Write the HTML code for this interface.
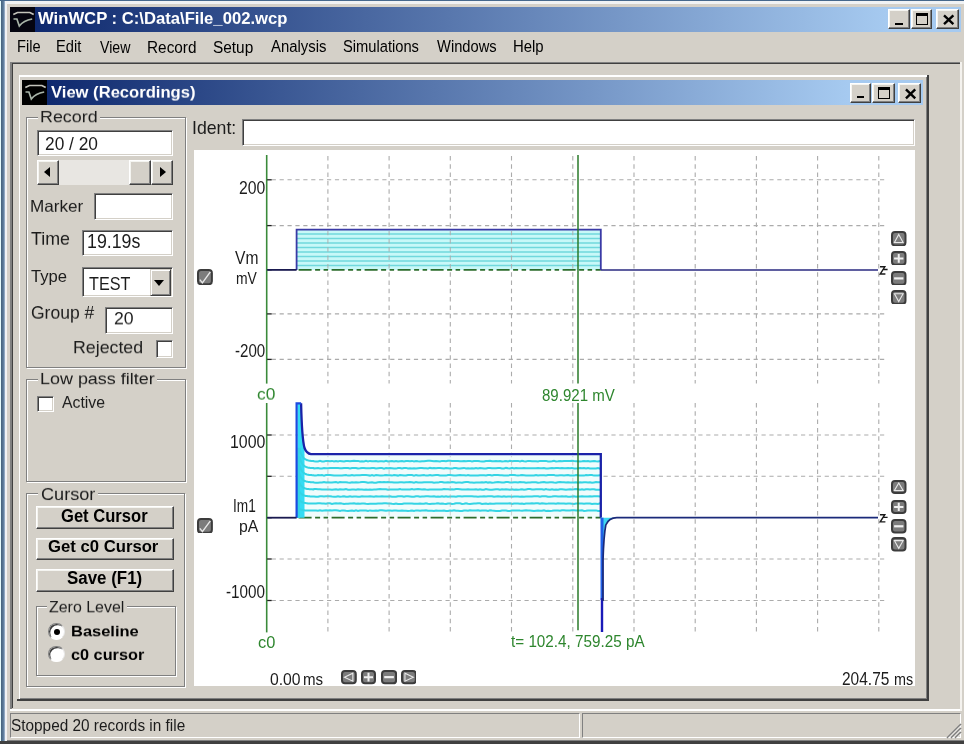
<!DOCTYPE html><html><head><meta charset="utf-8"><style>
*{margin:0;padding:0;box-sizing:border-box}
html,body{width:964px;height:744px;overflow:hidden;background:#d4d0c8}
body{position:relative;font-family:"Liberation Sans",sans-serif;color:#000}
.a{position:absolute}
.t{position:absolute;white-space:nowrap;line-height:1;transform-origin:0 0;will-change:transform}
.raised{background:#d4d0c8;border:1px solid;border-color:#fff #404040 #404040 #fff;box-shadow:inset -1px -1px 0 #808080,inset 1px 1px 0 #f4f4f0}
.sunk{background:#fff;border:1px solid;border-color:#808080 #fff #fff #808080;box-shadow:inset 1px 1px 0 #404040,inset -1px -1px 0 #d4d0c8}
.grp{border:1px solid #808080;box-shadow:1px 1px 0 #fff,inset 1px 1px 0 #fff}
.gl{position:absolute;background:#d4d0c8;padding:0 3px;line-height:1;white-space:nowrap}
</style></head><body>
<div class="a " style="left:0px;top:0px;width:964px;height:744px;background:#d4d0c8"></div>
<div class="a " style="left:0px;top:0px;width:1px;height:744px;background:#e4fafc"></div>
<div class="a " style="left:1px;top:0px;width:3.5px;height:744px;background:linear-gradient(to right,#44607a,#5c7c9c 60%,#a8bcd4)"></div>
<div class="a " style="left:0px;top:0px;width:964px;height:1.4px;background:#46688c"></div>
<div class="a " style="left:4.5px;top:1.4px;width:959.5px;height:2.4px;background:#f0f2f4"></div>
<div class="a " style="left:4.5px;top:1.4px;width:2.0px;height:742.6px;background:#f0f2f4"></div>
<div class="a " style="left:0px;top:741px;width:964px;height:3px;background:#404040"></div>
<div class="a " style="left:6.5px;top:739.5px;width:957.5px;height:1.5px;background:#808080"></div>
<div class="a " style="left:9.5px;top:7px;width:951.5px;height:25px;background:linear-gradient(to right,#0a246a 0px,#a6caf0 878px)"></div>
<div class="a" style="left:10px;top:7px;width:25px;height:25px;background:#050510"></div>
<svg class="a" style="left:10px;top:7px" width="25" height="25" viewBox="0 0 25 25"><path d="M3.3 7.4 L7.5 5.5 H19.9 L23.7 7.6" stroke="#c4c4bc" stroke-width="1.7" fill="none"/><path d="M3.5 12 H6.9 L9.3 19 Q13.5 13.5 22.2 12" stroke="#a8b4a8" stroke-width="1.7" fill="none"/></svg>
<div class="a raised" style="left:888px;top:9.3px;width:21.600000000000023px;height:19.7px;"><div class="a" style="left:5.832000000000007px;top:12.213999999999999px;width:7.776000000000008px;height:2.5px;background:#000"></div></div>
<div class="a raised" style="left:910.7px;top:9.3px;width:21.799999999999955px;height:19.7px;"><div class="a" style="left:4.359999999999991px;top:2.9549999999999996px;width:11.989999999999975px;height:12.213999999999999px;border:1.3px solid #000;border-top-width:3px"></div></div>
<div class="a raised" style="left:935.6px;top:9.3px;width:23.399999999999977px;height:19.7px;"><svg class="a" style="left:0;top:0" width="23.399999999999977" height="19.7" viewBox="0 0 23.399999999999977 19.7"><path d="M7.019999999999993 5.319 L16.379999999999985 14.184 M16.379999999999985 5.319 L7.019999999999993 14.184" stroke="#000" stroke-width="2.4"/></svg></div>
<div class="a " style="left:10.3px;top:61.5px;width:950.7px;height:1.2999999999999972px;background:#808080"></div>
<div class="a " style="left:10.3px;top:61.5px;width:1.299999999999999px;height:647.5px;background:#808080"></div>
<div class="a " style="left:11.6px;top:62.8px;width:948.4px;height:1.2000000000000028px;background:#404040"></div>
<div class="a " style="left:11.6px;top:62.8px;width:1.200000000000001px;height:645.2px;background:#404040"></div>
<div class="a " style="left:9.5px;top:709px;width:952.5px;height:1.5px;background:#fff"></div>
<div class="a " style="left:959.6px;top:61.5px;width:2.699999999999932px;height:649.0px;background:#f4f2ee"></div>
<div class="a " style="left:18.5px;top:75px;width:910.5px;height:626px;background:#d4d0c8"></div>
<div class="a " style="left:18.5px;top:75px;width:908.5px;height:1.5px;background:#fff"></div>
<div class="a " style="left:18.5px;top:75px;width:1.5px;height:624px;background:#fff"></div>
<div class="a " style="left:17px;top:699px;width:912px;height:2px;background:#404040"></div>
<div class="a " style="left:927px;top:75px;width:2px;height:626px;background:#404040"></div>
<div class="a " style="left:20px;top:697.5px;width:907px;height:1.5px;background:#808080"></div>
<div class="a " style="left:925.5px;top:76.5px;width:1.5px;height:622.5px;background:#808080"></div>
<div class="a " style="left:22.3px;top:80.3px;width:900.7px;height:24.5px;background:linear-gradient(to right,#0a246a 0px,#a6caf0 826px)"></div>
<div class="a" style="left:22.3px;top:80.3px;width:25px;height:24.5px;background:#000"></div>
<svg class="a" style="left:22.3px;top:80.3px" width="25" height="25" viewBox="0 0 25 25"><path d="M3.3 7.4 L7.5 5.5 H19.9 L23.7 7.6" stroke="#c4c4bc" stroke-width="1.7" fill="none"/><path d="M3.5 12 H6.9 L9.3 19 Q13.5 13.5 22.2 12" stroke="#a8b4a8" stroke-width="1.7" fill="none"/></svg>
<div class="a raised" style="left:850px;top:82.5px;width:21px;height:20.0px;"><div class="a" style="left:5.67px;top:12.4px;width:7.56px;height:2.5px;background:#000"></div></div>
<div class="a raised" style="left:872px;top:82.5px;width:23px;height:20.0px;"><div class="a" style="left:4.6000000000000005px;top:3.0px;width:12.65px;height:12.4px;border:1.3px solid #000;border-top-width:3px"></div></div>
<div class="a raised" style="left:897.5px;top:82.5px;width:23.200000000000045px;height:20.0px;"><svg class="a" style="left:0;top:0" width="23.200000000000045" height="20.0" viewBox="0 0 23.200000000000045 20.0"><path d="M6.960000000000013 5.4 L16.24000000000003 14.399999999999999 M16.24000000000003 5.4 L6.960000000000013 14.399999999999999" stroke="#000" stroke-width="2.4"/></svg></div>
<div class="a grp" style="left:26px;top:117px;width:159.5px;height:251px;"></div>
<div class="a " style="left:38px;top:109px;width:62px;height:12px;background:#d4d0c8"></div>
<div class="a sunk" style="left:37px;top:130px;width:136px;height:26px;"></div>
<div class="a " style="left:37px;top:159.5px;width:136px;height:25.5px;background:#e8e6e2"></div>
<div class="a raised" style="left:37px;top:159.5px;width:22px;height:25.5px;"><div class="a" style="left:5.5px;top:6px;width:0;height:0;border-top:5.5px solid transparent;border-bottom:5.5px solid transparent;border-right:6px solid #000"></div></div>
<div class="a raised" style="left:129px;top:159.5px;width:22px;height:25.5px;"></div>
<div class="a raised" style="left:151px;top:159.5px;width:22px;height:25.5px;"><div class="a" style="left:7.5px;top:6px;width:0;height:0;border-top:5.5px solid transparent;border-bottom:5.5px solid transparent;border-left:6px solid #000"></div></div>
<div class="a sunk" style="left:94px;top:193px;width:79px;height:27px;"></div>
<div class="a sunk" style="left:82px;top:229.7px;width:91px;height:26.80000000000001px;"></div>
<div class="a sunk" style="left:82px;top:267px;width:91px;height:30px;"></div>
<div class="a " style="left:149.5px;top:269px;width:21.69999999999999px;height:26.5px;background:#d4d0c8;border:1px solid;border-color:#d4d0c8 #404040 #404040 #d4d0c8;box-shadow:inset 1px 1px 0 #fff,inset -1px -1px 0 #808080"><div class="a" style="left:3.5px;top:9.5px;width:0;height:0;border-left:5.3px solid transparent;border-right:5.3px solid transparent;border-top:6px solid #000"></div></div>
<div class="a sunk" style="left:104.6px;top:307px;width:68.4px;height:27px;"></div>
<div class="a sunk" style="left:156px;top:340px;width:17px;height:17.600000000000023px;"></div>
<div class="a grp" style="left:25.5px;top:378.6px;width:160.5px;height:103.39999999999998px;"></div>
<div class="a " style="left:38px;top:370.6px;width:119px;height:12.0px;background:#d4d0c8"></div>
<div class="a sunk" style="left:37px;top:396px;width:17px;height:16px;"></div>
<div class="a grp" style="left:25.6px;top:492.6px;width:159.4px;height:194.39999999999998px;"></div>
<div class="a " style="left:38px;top:484.6px;width:60px;height:12.0px;background:#d4d0c8"></div>
<div class="a raised" style="left:36.3px;top:506px;width:138.2px;height:23px;"></div>
<div class="a raised" style="left:36.3px;top:537.6px;width:138.2px;height:22.899999999999977px;"></div>
<div class="a raised" style="left:36.3px;top:568.5px;width:138.2px;height:23.5px;"></div>
<div class="a grp" style="left:35.5px;top:606px;width:140.5px;height:70px;"></div>
<div class="a " style="left:47px;top:598px;width:80px;height:12px;background:#d4d0c8"></div>
<div class="a" style="left:48.3px;top:623.3px;width:16.5px;height:16.5px;border-radius:50%;background:#fff;border:1.3px solid;border-color:#808080 #e8e8e8 #fff #808080;box-shadow:inset 1.3px 1.3px 0 #404040"><div class="a" style="left:4.6px;top:4.6px;width:6px;height:6px;border-radius:50%;background:#000"></div></div>
<div class="a" style="left:48.3px;top:645.6px;width:16.5px;height:16.5px;border-radius:50%;background:#fff;border:1.3px solid;border-color:#808080 #e8e8e8 #fff #808080;box-shadow:inset 1.3px 1.3px 0 #404040"></div>
<div class="a sunk" style="left:241.7px;top:119px;width:673.3px;height:26.69999999999999px;"></div>
<div class="a " style="left:9.5px;top:712.5px;width:570.0px;height:25.0px;border:1px solid;border-color:#808080 #fff #fff #808080"></div>
<div class="a " style="left:582px;top:712.5px;width:379px;height:25.0px;border:1px solid;border-color:#808080 #fff #fff #808080"></div>
<svg class="a" style="left:945px;top:722px" width="17" height="17" viewBox="0 0 17 17"><path d="M16 2 L2 16 M16 6 L6 16 M16 10 L10 16" stroke="#808080" stroke-width="1.6"/><path d="M16 3.5 L3.5 16 M16 7.5 L7.5 16 M16 11.5 L11.5 16" stroke="#fff" stroke-width="0.8"/></svg>
<div class="a " style="left:194px;top:149.6px;width:721px;height:536.9px;background:#fff"></div>
<svg class="a" style="left:0;top:0" width="964" height="744" viewBox="0 0 964 744"><line x1="327.9" y1="156" x2="327.9" y2="383.5" stroke="#ababab" stroke-width="1.1" stroke-dasharray="4.5 3.8"/><line x1="327.9" y1="403" x2="327.9" y2="632.5" stroke="#ababab" stroke-width="1.1" stroke-dasharray="4.5 3.8"/><line x1="389.1" y1="156" x2="389.1" y2="383.5" stroke="#ababab" stroke-width="1.1" stroke-dasharray="4.5 3.8"/><line x1="389.1" y1="403" x2="389.1" y2="632.5" stroke="#ababab" stroke-width="1.1" stroke-dasharray="4.5 3.8"/><line x1="450.3" y1="156" x2="450.3" y2="383.5" stroke="#ababab" stroke-width="1.1" stroke-dasharray="4.5 3.8"/><line x1="450.3" y1="403" x2="450.3" y2="632.5" stroke="#ababab" stroke-width="1.1" stroke-dasharray="4.5 3.8"/><line x1="511.5" y1="156" x2="511.5" y2="383.5" stroke="#ababab" stroke-width="1.1" stroke-dasharray="4.5 3.8"/><line x1="511.5" y1="403" x2="511.5" y2="632.5" stroke="#ababab" stroke-width="1.1" stroke-dasharray="4.5 3.8"/><line x1="572.8" y1="156" x2="572.8" y2="383.5" stroke="#ababab" stroke-width="1.1" stroke-dasharray="4.5 3.8"/><line x1="572.8" y1="403" x2="572.8" y2="632.5" stroke="#ababab" stroke-width="1.1" stroke-dasharray="4.5 3.8"/><line x1="634.0" y1="156" x2="634.0" y2="383.5" stroke="#ababab" stroke-width="1.1" stroke-dasharray="4.5 3.8"/><line x1="634.0" y1="403" x2="634.0" y2="632.5" stroke="#ababab" stroke-width="1.1" stroke-dasharray="4.5 3.8"/><line x1="695.2" y1="156" x2="695.2" y2="383.5" stroke="#ababab" stroke-width="1.1" stroke-dasharray="4.5 3.8"/><line x1="695.2" y1="403" x2="695.2" y2="632.5" stroke="#ababab" stroke-width="1.1" stroke-dasharray="4.5 3.8"/><line x1="756.4" y1="156" x2="756.4" y2="383.5" stroke="#ababab" stroke-width="1.1" stroke-dasharray="4.5 3.8"/><line x1="756.4" y1="403" x2="756.4" y2="632.5" stroke="#ababab" stroke-width="1.1" stroke-dasharray="4.5 3.8"/><line x1="817.6" y1="156" x2="817.6" y2="383.5" stroke="#ababab" stroke-width="1.1" stroke-dasharray="4.5 3.8"/><line x1="817.6" y1="403" x2="817.6" y2="632.5" stroke="#ababab" stroke-width="1.1" stroke-dasharray="4.5 3.8"/><line x1="878.8" y1="156" x2="878.8" y2="383.5" stroke="#ababab" stroke-width="1.1" stroke-dasharray="4.5 3.8"/><line x1="878.8" y1="403" x2="878.8" y2="632.5" stroke="#ababab" stroke-width="1.1" stroke-dasharray="4.5 3.8"/><line x1="266.7" y1="179.8" x2="887" y2="179.8" stroke="#ababab" stroke-width="1.1" stroke-dasharray="4.2 3.7" stroke-dashoffset="-5"/><line x1="266.7" y1="225.6" x2="887" y2="225.6" stroke="#ababab" stroke-width="1.1" stroke-dasharray="4.2 3.7" stroke-dashoffset="-5"/><line x1="266.7" y1="313.9" x2="887" y2="313.9" stroke="#ababab" stroke-width="1.1" stroke-dasharray="4.2 3.7" stroke-dashoffset="-5"/><line x1="266.7" y1="359.4" x2="887" y2="359.4" stroke="#ababab" stroke-width="1.1" stroke-dasharray="4.2 3.7" stroke-dashoffset="-5"/><line x1="266.7" y1="435" x2="887" y2="435" stroke="#ababab" stroke-width="1.1" stroke-dasharray="4.2 3.7" stroke-dashoffset="-5"/><line x1="266.7" y1="476.3" x2="887" y2="476.3" stroke="#ababab" stroke-width="1.1" stroke-dasharray="4.2 3.7" stroke-dashoffset="-5"/><line x1="266.7" y1="559" x2="887" y2="559" stroke="#ababab" stroke-width="1.1" stroke-dasharray="4.2 3.7" stroke-dashoffset="-5"/><line x1="266.7" y1="600.5" x2="887" y2="600.5" stroke="#ababab" stroke-width="1.1" stroke-dasharray="4.2 3.7" stroke-dashoffset="-5"/><line x1="266.7" y1="155" x2="266.7" y2="383.6" stroke="#3a8a3a" stroke-width="1.6"/><line x1="266.7" y1="403" x2="266.7" y2="632.4" stroke="#3a8a3a" stroke-width="1.6"/><line x1="267.2" y1="179.8" x2="271.7" y2="179.8" stroke="#202020" stroke-width="1.3"/><line x1="267.2" y1="225.6" x2="271.7" y2="225.6" stroke="#202020" stroke-width="1.3"/><line x1="267.2" y1="269.8" x2="271.7" y2="269.8" stroke="#202020" stroke-width="1.3"/><line x1="267.2" y1="313.9" x2="271.7" y2="313.9" stroke="#202020" stroke-width="1.3"/><line x1="267.2" y1="359.4" x2="271.7" y2="359.4" stroke="#202020" stroke-width="1.3"/><line x1="267.2" y1="435" x2="271.7" y2="435" stroke="#202020" stroke-width="1.3"/><line x1="267.2" y1="476.3" x2="271.7" y2="476.3" stroke="#202020" stroke-width="1.3"/><line x1="267.2" y1="517.7" x2="271.7" y2="517.7" stroke="#202020" stroke-width="1.3"/><line x1="267.2" y1="559" x2="271.7" y2="559" stroke="#202020" stroke-width="1.3"/><line x1="267.2" y1="600.5" x2="271.7" y2="600.5" stroke="#202020" stroke-width="1.3"/><rect x="296.6" y="229.6" width="304.19999999999993" height="40.29999999999998" fill="#c8f8f8"/><line x1="296.6" y1="265.42" x2="600.8" y2="265.42" stroke="#70d8dc" stroke-width="1.5"/><line x1="296.6" y1="260.94" x2="600.8" y2="260.94" stroke="#70d8dc" stroke-width="1.5"/><line x1="296.6" y1="256.47" x2="600.8" y2="256.47" stroke="#70d8dc" stroke-width="1.5"/><line x1="296.6" y1="251.99" x2="600.8" y2="251.99" stroke="#70d8dc" stroke-width="1.5"/><line x1="296.6" y1="247.51" x2="600.8" y2="247.51" stroke="#70d8dc" stroke-width="1.5"/><line x1="296.6" y1="243.03" x2="600.8" y2="243.03" stroke="#70d8dc" stroke-width="1.5"/><line x1="296.6" y1="238.56" x2="600.8" y2="238.56" stroke="#70d8dc" stroke-width="1.5"/><line x1="296.6" y1="234.08" x2="600.8" y2="234.08" stroke="#70d8dc" stroke-width="1.5"/><line x1="298.6" y1="269.9" x2="600.8" y2="269.9" stroke="#2c6c2c" stroke-width="1.8" stroke-dasharray="13 3.5 5 3.5 4.5 3.5"/><path d="M296.6 269.9 V229.6 H600.8 V269.9" stroke="#3a3aa6" stroke-width="1.8" fill="none"/><line x1="600.8" y1="269.9" x2="878" y2="269.9" stroke="#2a2a80" stroke-width="1.5"/><line x1="267.2" y1="269.9" x2="296.6" y2="269.9" stroke="#1a1a50" stroke-width="1.8"/><rect x="296.6" y="454.1" width="304.19999999999993" height="63.60000000000002" fill="#f0fcfc"/><line x1="298.6" y1="517.7" x2="600.8" y2="517.7" stroke="#2c6c2c" stroke-width="1.8" stroke-dasharray="13 3.5 5 3.5 4.5 3.5"/><path d="M297.40000000000003 517.7 V403.3 H301.1 C301.6 425 302.3 440 304.5 448 L304.5 517.7 Z" fill="#34dcf4"/><path d="M298.6 517.7 L298.6 509.1 L299.6 509.1 L300.0 509.3 L300.4 509.4 L300.8 509.6 L301.2 509.7 L301.6 509.8 L302.0 509.9 L302.4 510.0 L302.8 510.1 L303.2 510.2 L303.6 510.2 L304.0 510.3 L304.4 510.3 L304.8 510.4 L305.2 510.4 L305.6 510.4 L306.0 510.4 L306.4 510.5 L306.8 510.5 L307.2 510.5 L307.6 510.5 L308.0 510.5 L308.4 510.6 L308.8 510.6 L309.2 510.6 L309.6 510.6 L310.0 510.6 L310.4 510.6 L310.8 510.6 L311.2 510.6 L311.6 510.6 L312.0 510.6 L312.4 510.6 L312.8 510.6 L313.2 510.6 L313.6 510.6 L314.0 510.5 L316.0 510.4 L318.0 510.7 L320.0 510.3 L322.0 510.7 L324.0 510.5 L326.0 510.3 L328.0 510.6 L330.0 510.3 L332.0 510.6 L334.0 510.3 L336.0 510.3 L338.0 510.6 L340.0 510.9 L342.0 510.4 L344.0 510.4 L346.0 510.7 L348.0 510.9 L350.0 510.7 L352.0 510.6 L354.0 511.0 L356.0 510.3 L358.0 510.9 L360.0 510.5 L362.0 510.4 L364.0 510.4 L366.0 510.5 L368.0 510.9 L370.0 510.4 L372.0 510.7 L374.0 510.7 L376.0 510.5 L378.0 510.7 L380.0 510.3 L382.0 510.3 L384.0 510.4 L386.0 510.8 L388.0 510.6 L390.0 510.5 L392.0 510.7 L394.0 510.6 L396.0 510.5 L398.0 510.8 L400.0 510.8 L402.0 510.5 L404.0 510.7 L406.0 510.7 L408.0 510.9 L410.0 510.8 L412.0 510.5 L414.0 511.0 L416.0 510.4 L418.0 510.6 L420.0 510.8 L422.0 510.4 L424.0 510.6 L426.0 510.3 L428.0 510.8 L430.0 510.8 L432.0 510.7 L434.0 510.9 L436.0 510.5 L438.0 510.8 L440.0 510.7 L442.0 510.7 L444.0 510.6 L446.0 510.9 L448.0 510.9 L450.0 510.6 L452.0 510.7 L454.0 510.3 L456.0 510.8 L458.0 510.7 L460.0 511.0 L462.0 510.9 L464.0 510.5 L466.0 510.6 L468.0 510.8 L470.0 510.3 L472.0 510.6 L474.0 510.4 L476.0 510.4 L478.0 510.3 L480.0 510.8 L482.0 510.4 L484.0 510.5 L486.0 510.6 L488.0 510.9 L490.0 510.3 L492.0 510.6 L494.0 510.7 L496.0 510.9 L498.0 510.9 L500.0 510.9 L502.0 510.5 L504.0 510.6 L506.0 510.5 L508.0 510.9 L510.0 511.0 L512.0 510.4 L514.0 510.4 L516.0 510.4 L518.0 510.4 L520.0 510.6 L522.0 510.7 L524.0 510.5 L526.0 510.3 L528.0 510.6 L530.0 510.5 L532.0 510.7 L534.0 511.0 L536.0 510.8 L538.0 510.6 L540.0 510.7 L542.0 510.8 L544.0 510.3 L546.0 510.9 L548.0 510.8 L550.0 510.9 L552.0 510.8 L554.0 510.6 L556.0 510.6 L558.0 510.4 L560.0 510.7 L562.0 510.3 L564.0 510.3 L566.0 510.4 L568.0 510.4 L570.0 510.5 L572.0 510.3 L574.0 510.3 L576.0 510.4 L578.0 510.4 L580.0 510.5 L582.0 510.3 L584.0 510.9 L586.0 510.7 L588.0 510.4 L590.0 510.5 L592.0 510.5 L594.0 510.5 L596.0 510.4 L598.0 510.9 L600.0 511.0 L600.8 510.6" stroke="#34d4e4" stroke-width="2" fill="none"/><path d="M298.6 517.7 L298.6 500.5 L299.6 500.5 L300.0 500.8 L300.4 501.2 L300.8 501.5 L301.2 501.7 L301.6 502.0 L302.0 502.2 L302.4 502.3 L302.8 502.5 L303.2 502.6 L303.6 502.7 L304.0 502.8 L304.4 502.9 L304.8 503.0 L305.2 503.1 L305.6 503.1 L306.0 503.2 L306.4 503.2 L306.8 503.3 L307.2 503.3 L307.6 503.4 L308.0 503.4 L308.4 503.4 L308.8 503.4 L309.2 503.4 L309.6 503.5 L310.0 503.5 L310.4 503.5 L310.8 503.5 L311.2 503.5 L311.6 503.5 L312.0 503.5 L312.4 503.5 L312.8 503.5 L313.2 503.5 L313.6 503.5 L314.0 503.5 L316.0 503.6 L318.0 503.3 L320.0 503.3 L322.0 503.5 L324.0 503.4 L326.0 503.8 L328.0 503.3 L330.0 503.2 L332.0 503.9 L334.0 503.6 L336.0 503.3 L338.0 503.6 L340.0 503.2 L342.0 503.6 L344.0 503.9 L346.0 503.8 L348.0 503.7 L350.0 503.4 L352.0 503.5 L354.0 503.3 L356.0 503.8 L358.0 503.6 L360.0 503.8 L362.0 503.4 L364.0 503.4 L366.0 503.8 L368.0 503.9 L370.0 503.8 L372.0 503.8 L374.0 503.8 L376.0 503.7 L378.0 503.4 L380.0 503.6 L382.0 503.5 L384.0 503.2 L386.0 503.2 L388.0 503.4 L390.0 503.4 L392.0 503.7 L394.0 503.9 L396.0 503.5 L398.0 503.9 L400.0 503.9 L402.0 503.9 L404.0 503.5 L406.0 503.4 L408.0 503.4 L410.0 503.4 L412.0 503.4 L414.0 503.7 L416.0 503.8 L418.0 503.8 L420.0 503.6 L422.0 503.7 L424.0 503.8 L426.0 503.3 L428.0 503.7 L430.0 503.9 L432.0 503.8 L434.0 503.7 L436.0 503.6 L438.0 503.3 L440.0 503.8 L442.0 503.4 L444.0 503.8 L446.0 503.9 L448.0 503.5 L450.0 503.5 L452.0 503.9 L454.0 503.7 L456.0 503.3 L458.0 503.3 L460.0 503.3 L462.0 503.9 L464.0 503.8 L466.0 503.3 L468.0 503.8 L470.0 503.9 L472.0 503.7 L474.0 503.5 L476.0 503.6 L478.0 503.3 L480.0 503.2 L482.0 503.9 L484.0 503.7 L486.0 503.6 L488.0 503.9 L490.0 503.5 L492.0 503.8 L494.0 503.8 L496.0 503.4 L498.0 503.4 L500.0 503.4 L502.0 503.4 L504.0 503.6 L506.0 503.4 L508.0 503.5 L510.0 503.3 L512.0 503.9 L514.0 503.5 L516.0 503.5 L518.0 503.6 L520.0 503.8 L522.0 503.5 L524.0 503.9 L526.0 503.6 L528.0 503.6 L530.0 503.6 L532.0 503.2 L534.0 503.5 L536.0 503.3 L538.0 503.2 L540.0 503.8 L542.0 503.3 L544.0 503.5 L546.0 503.7 L548.0 503.6 L550.0 503.4 L552.0 503.6 L554.0 503.6 L556.0 503.8 L558.0 503.3 L560.0 503.6 L562.0 503.4 L564.0 503.4 L566.0 503.8 L568.0 503.6 L570.0 503.6 L572.0 503.7 L574.0 503.9 L576.0 503.5 L578.0 503.6 L580.0 503.6 L582.0 503.6 L584.0 503.7 L586.0 503.5 L588.0 503.6 L590.0 503.6 L592.0 503.9 L594.0 503.7 L596.0 503.8 L598.0 503.9 L600.0 503.4 L600.8 503.6" stroke="#34d4e4" stroke-width="2" fill="none"/><path d="M298.6 517.7 L298.6 491.8 L299.6 491.8 L300.0 492.4 L300.4 492.9 L300.8 493.4 L301.2 493.8 L301.6 494.1 L302.0 494.4 L302.4 494.7 L302.8 494.9 L303.2 495.1 L303.6 495.3 L304.0 495.4 L304.4 495.6 L304.8 495.7 L305.2 495.8 L305.6 495.9 L306.0 495.9 L306.4 496.0 L306.8 496.1 L307.2 496.1 L307.6 496.2 L308.0 496.2 L308.4 496.3 L308.8 496.3 L309.2 496.3 L309.6 496.3 L310.0 496.4 L310.4 496.4 L310.8 496.4 L311.2 496.4 L311.6 496.4 L312.0 496.4 L312.4 496.4 L312.8 496.4 L313.2 496.4 L313.6 496.5 L314.0 496.5 L316.0 496.8 L318.0 496.7 L320.0 496.2 L322.0 496.2 L324.0 496.5 L326.0 496.2 L328.0 496.3 L330.0 496.2 L332.0 496.6 L334.0 496.7 L336.0 496.8 L338.0 496.3 L340.0 496.7 L342.0 496.6 L344.0 496.3 L346.0 496.8 L348.0 496.8 L350.0 496.3 L352.0 496.8 L354.0 496.4 L356.0 496.5 L358.0 496.8 L360.0 496.7 L362.0 496.3 L364.0 496.5 L366.0 496.5 L368.0 496.4 L370.0 496.3 L372.0 496.4 L374.0 496.7 L376.0 496.2 L378.0 496.5 L380.0 496.5 L382.0 496.2 L384.0 496.4 L386.0 496.6 L388.0 496.5 L390.0 496.2 L392.0 496.8 L394.0 496.7 L396.0 496.8 L398.0 496.2 L400.0 496.3 L402.0 496.2 L404.0 496.7 L406.0 496.3 L408.0 496.2 L410.0 496.4 L412.0 496.8 L414.0 496.7 L416.0 496.3 L418.0 496.3 L420.0 496.8 L422.0 496.5 L424.0 496.6 L426.0 496.2 L428.0 496.2 L430.0 496.6 L432.0 496.4 L434.0 496.2 L436.0 496.8 L438.0 496.6 L440.0 496.7 L442.0 496.2 L444.0 496.7 L446.0 496.2 L448.0 496.8 L450.0 496.5 L452.0 496.4 L454.0 496.5 L456.0 496.8 L458.0 496.3 L460.0 496.2 L462.0 496.5 L464.0 496.3 L466.0 496.2 L468.0 496.3 L470.0 496.2 L472.0 496.3 L474.0 496.4 L476.0 496.4 L478.0 496.7 L480.0 496.4 L482.0 496.5 L484.0 496.3 L486.0 496.4 L488.0 496.2 L490.0 496.3 L492.0 496.2 L494.0 496.7 L496.0 496.5 L498.0 496.3 L500.0 496.5 L502.0 496.8 L504.0 496.2 L506.0 496.7 L508.0 496.5 L510.0 496.5 L512.0 496.7 L514.0 496.4 L516.0 496.5 L518.0 496.6 L520.0 496.8 L522.0 496.4 L524.0 496.7 L526.0 496.6 L528.0 496.6 L530.0 496.4 L532.0 496.4 L534.0 496.2 L536.0 496.2 L538.0 496.2 L540.0 496.7 L542.0 496.3 L544.0 496.3 L546.0 496.2 L548.0 496.7 L550.0 496.8 L552.0 496.6 L554.0 496.3 L556.0 496.3 L558.0 496.4 L560.0 496.5 L562.0 496.3 L564.0 496.5 L566.0 496.3 L568.0 496.8 L570.0 496.8 L572.0 496.5 L574.0 496.3 L576.0 496.8 L578.0 496.4 L580.0 496.4 L582.0 496.2 L584.0 496.4 L586.0 496.5 L588.0 496.5 L590.0 496.3 L592.0 496.5 L594.0 496.2 L596.0 496.3 L598.0 496.2 L600.0 496.4 L600.8 496.5" stroke="#34d4e4" stroke-width="2" fill="none"/><path d="M298.6 517.7 L298.6 483.2 L299.6 483.2 L300.0 484.0 L300.4 484.7 L300.8 485.3 L301.2 485.8 L301.6 486.2 L302.0 486.6 L302.4 487.0 L302.8 487.3 L303.2 487.6 L303.6 487.8 L304.0 488.0 L304.4 488.2 L304.8 488.3 L305.2 488.5 L305.6 488.6 L306.0 488.7 L306.4 488.8 L306.8 488.9 L307.2 488.9 L307.6 489.0 L308.0 489.1 L308.4 489.1 L308.8 489.1 L309.2 489.2 L309.6 489.2 L310.0 489.2 L310.4 489.3 L310.8 489.3 L311.2 489.3 L311.6 489.3 L312.0 489.3 L312.4 489.3 L312.8 489.4 L313.2 489.4 L313.6 489.4 L314.0 489.1 L316.0 489.1 L318.0 489.3 L320.0 489.2 L322.0 489.5 L324.0 489.5 L326.0 489.6 L328.0 489.5 L330.0 489.6 L332.0 489.7 L334.0 489.4 L336.0 489.3 L338.0 489.8 L340.0 489.2 L342.0 489.6 L344.0 489.5 L346.0 489.1 L348.0 489.7 L350.0 489.7 L352.0 489.5 L354.0 489.6 L356.0 489.7 L358.0 489.2 L360.0 489.4 L362.0 489.4 L364.0 489.7 L366.0 489.6 L368.0 489.7 L370.0 489.5 L372.0 489.7 L374.0 489.6 L376.0 489.6 L378.0 489.2 L380.0 489.1 L382.0 489.2 L384.0 489.3 L386.0 489.2 L388.0 489.7 L390.0 489.5 L392.0 489.5 L394.0 489.5 L396.0 489.6 L398.0 489.4 L400.0 489.1 L402.0 489.6 L404.0 489.6 L406.0 489.4 L408.0 489.5 L410.0 489.5 L412.0 489.1 L414.0 489.6 L416.0 489.3 L418.0 489.1 L420.0 489.3 L422.0 489.6 L424.0 489.2 L426.0 489.6 L428.0 489.8 L430.0 489.4 L432.0 489.4 L434.0 489.4 L436.0 489.6 L438.0 489.6 L440.0 489.5 L442.0 489.5 L444.0 489.1 L446.0 489.2 L448.0 489.3 L450.0 489.6 L452.0 489.3 L454.0 489.5 L456.0 489.1 L458.0 489.1 L460.0 489.3 L462.0 489.6 L464.0 489.6 L466.0 489.6 L468.0 489.3 L470.0 489.4 L472.0 489.4 L474.0 489.4 L476.0 489.2 L478.0 489.7 L480.0 489.2 L482.0 489.8 L484.0 489.7 L486.0 489.1 L488.0 489.4 L490.0 489.7 L492.0 489.8 L494.0 489.4 L496.0 489.3 L498.0 489.2 L500.0 489.7 L502.0 489.2 L504.0 489.5 L506.0 489.2 L508.0 489.5 L510.0 489.8 L512.0 489.2 L514.0 489.7 L516.0 489.4 L518.0 489.7 L520.0 489.6 L522.0 489.2 L524.0 489.7 L526.0 489.4 L528.0 489.1 L530.0 489.1 L532.0 489.4 L534.0 489.4 L536.0 489.3 L538.0 489.2 L540.0 489.3 L542.0 489.3 L544.0 489.7 L546.0 489.1 L548.0 489.6 L550.0 489.7 L552.0 489.2 L554.0 489.7 L556.0 489.6 L558.0 489.7 L560.0 489.3 L562.0 489.3 L564.0 489.4 L566.0 489.8 L568.0 489.5 L570.0 489.3 L572.0 489.4 L574.0 489.3 L576.0 489.1 L578.0 489.2 L580.0 489.7 L582.0 489.3 L584.0 489.7 L586.0 489.3 L588.0 489.3 L590.0 489.4 L592.0 489.2 L594.0 489.3 L596.0 489.8 L598.0 489.7 L600.0 489.7 L600.8 489.4" stroke="#34d4e4" stroke-width="2" fill="none"/><path d="M298.6 517.7 L298.6 474.6 L299.6 474.6 L300.0 475.6 L300.4 476.4 L300.8 477.2 L301.2 477.8 L301.6 478.4 L302.0 478.9 L302.4 479.3 L302.8 479.7 L303.2 480.0 L303.6 480.3 L304.0 480.6 L304.4 480.8 L304.8 481.0 L305.2 481.2 L305.6 481.3 L306.0 481.4 L306.4 481.6 L306.8 481.7 L307.2 481.7 L307.6 481.8 L308.0 481.9 L308.4 482.0 L308.8 482.0 L309.2 482.0 L309.6 482.1 L310.0 482.1 L310.4 482.2 L310.8 482.2 L311.2 482.2 L311.6 482.2 L312.0 482.2 L312.4 482.3 L312.8 482.3 L313.2 482.3 L313.6 482.3 L314.0 482.5 L316.0 482.7 L318.0 482.7 L320.0 482.4 L322.0 482.5 L324.0 482.1 L326.0 482.5 L328.0 482.3 L330.0 482.5 L332.0 482.5 L334.0 482.2 L336.0 482.1 L338.0 482.7 L340.0 482.1 L342.0 482.3 L344.0 482.3 L346.0 482.2 L348.0 482.5 L350.0 482.7 L352.0 482.2 L354.0 482.5 L356.0 482.2 L358.0 482.4 L360.0 482.3 L362.0 482.1 L364.0 482.1 L366.0 482.2 L368.0 482.7 L370.0 482.4 L372.0 482.2 L374.0 482.7 L376.0 482.7 L378.0 482.3 L380.0 482.1 L382.0 482.2 L384.0 482.1 L386.0 482.3 L388.0 482.1 L390.0 482.2 L392.0 482.2 L394.0 482.4 L396.0 482.6 L398.0 482.5 L400.0 482.3 L402.0 482.3 L404.0 482.4 L406.0 482.3 L408.0 482.3 L410.0 482.1 L412.0 482.2 L414.0 482.7 L416.0 482.1 L418.0 482.4 L420.0 482.5 L422.0 482.6 L424.0 482.2 L426.0 482.2 L428.0 482.2 L430.0 482.3 L432.0 482.3 L434.0 482.7 L436.0 482.6 L438.0 482.6 L440.0 482.0 L442.0 482.0 L444.0 482.5 L446.0 482.6 L448.0 482.3 L450.0 482.4 L452.0 482.0 L454.0 482.3 L456.0 482.7 L458.0 482.6 L460.0 482.6 L462.0 482.7 L464.0 482.2 L466.0 482.1 L468.0 482.1 L470.0 482.4 L472.0 482.5 L474.0 482.7 L476.0 482.5 L478.0 482.5 L480.0 482.6 L482.0 482.3 L484.0 482.4 L486.0 482.0 L488.0 482.6 L490.0 482.2 L492.0 482.7 L494.0 482.5 L496.0 482.2 L498.0 482.1 L500.0 482.2 L502.0 482.5 L504.0 482.5 L506.0 482.1 L508.0 482.1 L510.0 482.4 L512.0 482.4 L514.0 482.3 L516.0 482.2 L518.0 482.4 L520.0 482.0 L522.0 482.2 L524.0 482.3 L526.0 482.7 L528.0 482.5 L530.0 482.6 L532.0 482.3 L534.0 482.2 L536.0 482.2 L538.0 482.7 L540.0 482.5 L542.0 482.2 L544.0 482.0 L546.0 482.4 L548.0 482.5 L550.0 482.3 L552.0 482.2 L554.0 482.5 L556.0 482.7 L558.0 482.2 L560.0 482.0 L562.0 482.3 L564.0 482.3 L566.0 482.5 L568.0 482.2 L570.0 482.6 L572.0 482.5 L574.0 482.4 L576.0 482.2 L578.0 482.7 L580.0 482.2 L582.0 482.6 L584.0 482.2 L586.0 482.2 L588.0 482.5 L590.0 482.2 L592.0 482.7 L594.0 482.4 L596.0 482.1 L598.0 482.2 L600.0 482.3 L600.8 482.4" stroke="#34d4e4" stroke-width="2" fill="none"/><path d="M298.6 517.7 L298.6 466.0 L299.6 466.0 L300.0 467.1 L300.4 468.2 L300.8 469.0 L301.2 469.8 L301.6 470.5 L302.0 471.1 L302.4 471.6 L302.8 472.1 L303.2 472.5 L303.6 472.8 L304.0 473.1 L304.4 473.4 L304.8 473.7 L305.2 473.9 L305.6 474.0 L306.0 474.2 L306.4 474.3 L306.8 474.5 L307.2 474.6 L307.6 474.7 L308.0 474.7 L308.4 474.8 L308.8 474.9 L309.2 474.9 L309.6 475.0 L310.0 475.0 L310.4 475.0 L310.8 475.1 L311.2 475.1 L311.6 475.1 L312.0 475.2 L312.4 475.2 L312.8 475.2 L313.2 475.2 L313.6 475.2 L314.0 475.4 L316.0 475.6 L318.0 475.1 L320.0 475.2 L322.0 475.1 L324.0 475.6 L326.0 475.0 L328.0 475.0 L330.0 475.0 L332.0 475.2 L334.0 475.6 L336.0 475.6 L338.0 475.5 L340.0 475.6 L342.0 475.6 L344.0 475.2 L346.0 475.1 L348.0 475.6 L350.0 475.5 L352.0 475.0 L354.0 475.4 L356.0 475.2 L358.0 475.2 L360.0 475.2 L362.0 475.1 L364.0 475.0 L366.0 475.1 L368.0 475.2 L370.0 475.6 L372.0 475.0 L374.0 475.6 L376.0 475.1 L378.0 475.2 L380.0 475.5 L382.0 475.5 L384.0 475.3 L386.0 475.0 L388.0 475.3 L390.0 475.2 L392.0 475.6 L394.0 475.1 L396.0 475.2 L398.0 475.6 L400.0 475.0 L402.0 475.2 L404.0 475.5 L406.0 475.5 L408.0 475.0 L410.0 475.0 L412.0 475.0 L414.0 475.6 L416.0 475.1 L418.0 475.5 L420.0 475.6 L422.0 475.2 L424.0 475.1 L426.0 475.6 L428.0 475.4 L430.0 475.1 L432.0 475.5 L434.0 475.2 L436.0 475.1 L438.0 475.0 L440.0 475.5 L442.0 475.6 L444.0 475.4 L446.0 475.6 L448.0 475.0 L450.0 475.1 L452.0 475.3 L454.0 475.6 L456.0 475.6 L458.0 475.2 L460.0 475.1 L462.0 475.3 L464.0 475.3 L466.0 475.6 L468.0 475.1 L470.0 475.5 L472.0 475.5 L474.0 475.5 L476.0 475.5 L478.0 475.4 L480.0 475.2 L482.0 475.2 L484.0 475.2 L486.0 475.5 L488.0 475.0 L490.0 475.1 L492.0 475.5 L494.0 475.1 L496.0 475.0 L498.0 475.0 L500.0 475.3 L502.0 475.2 L504.0 475.6 L506.0 475.6 L508.0 475.6 L510.0 475.1 L512.0 475.0 L514.0 475.0 L516.0 475.3 L518.0 475.4 L520.0 475.3 L522.0 475.1 L524.0 475.2 L526.0 475.4 L528.0 475.4 L530.0 475.5 L532.0 475.5 L534.0 475.4 L536.0 475.0 L538.0 475.5 L540.0 475.2 L542.0 475.3 L544.0 475.2 L546.0 475.5 L548.0 475.1 L550.0 475.1 L552.0 475.1 L554.0 475.1 L556.0 475.6 L558.0 475.4 L560.0 475.2 L562.0 475.2 L564.0 475.6 L566.0 475.3 L568.0 475.1 L570.0 475.5 L572.0 475.4 L574.0 475.6 L576.0 475.0 L578.0 475.3 L580.0 475.5 L582.0 475.5 L584.0 475.6 L586.0 475.0 L588.0 475.2 L590.0 475.0 L592.0 475.1 L594.0 475.6 L596.0 475.4 L598.0 475.6 L600.0 475.2 L600.8 475.3" stroke="#34d4e4" stroke-width="2" fill="none"/><path d="M298.6 517.7 L298.6 457.3 L299.6 457.3 L300.0 458.7 L300.4 459.9 L300.8 460.9 L301.2 461.8 L301.6 462.6 L302.0 463.3 L302.4 464.0 L302.8 464.5 L303.2 465.0 L303.6 465.4 L304.0 465.7 L304.4 466.0 L304.8 466.3 L305.2 466.5 L305.6 466.8 L306.0 466.9 L306.4 467.1 L306.8 467.2 L307.2 467.4 L307.6 467.5 L308.0 467.6 L308.4 467.7 L308.8 467.7 L309.2 467.8 L309.6 467.8 L310.0 467.9 L310.4 467.9 L310.8 468.0 L311.2 468.0 L311.6 468.0 L312.0 468.1 L312.4 468.1 L312.8 468.1 L313.2 468.1 L313.6 468.1 L314.0 468.5 L316.0 468.2 L318.0 468.1 L320.0 468.4 L322.0 468.5 L324.0 468.0 L326.0 468.3 L328.0 468.3 L330.0 468.0 L332.0 468.1 L334.0 468.0 L336.0 468.0 L338.0 468.1 L340.0 468.3 L342.0 468.3 L344.0 468.0 L346.0 467.9 L348.0 468.1 L350.0 468.4 L352.0 468.0 L354.0 468.1 L356.0 468.0 L358.0 468.4 L360.0 468.3 L362.0 467.9 L364.0 468.0 L366.0 468.2 L368.0 468.3 L370.0 468.3 L372.0 467.9 L374.0 468.0 L376.0 468.4 L378.0 468.2 L380.0 468.1 L382.0 468.1 L384.0 468.6 L386.0 468.1 L388.0 468.3 L390.0 468.1 L392.0 468.2 L394.0 468.5 L396.0 468.6 L398.0 468.1 L400.0 468.0 L402.0 468.4 L404.0 468.0 L406.0 467.9 L408.0 468.5 L410.0 468.2 L412.0 468.5 L414.0 468.2 L416.0 468.5 L418.0 468.2 L420.0 468.0 L422.0 467.9 L424.0 468.3 L426.0 468.3 L428.0 468.5 L430.0 467.9 L432.0 468.3 L434.0 468.1 L436.0 468.2 L438.0 468.0 L440.0 468.1 L442.0 468.2 L444.0 468.5 L446.0 468.0 L448.0 468.2 L450.0 468.4 L452.0 468.6 L454.0 468.0 L456.0 468.0 L458.0 468.5 L460.0 468.6 L462.0 468.2 L464.0 467.9 L466.0 468.5 L468.0 468.2 L470.0 468.5 L472.0 468.3 L474.0 468.5 L476.0 468.0 L478.0 468.4 L480.0 468.0 L482.0 468.2 L484.0 468.5 L486.0 468.5 L488.0 468.0 L490.0 468.0 L492.0 468.2 L494.0 468.2 L496.0 468.2 L498.0 468.0 L500.0 468.1 L502.0 468.4 L504.0 468.5 L506.0 467.9 L508.0 468.3 L510.0 468.4 L512.0 467.9 L514.0 468.5 L516.0 468.0 L518.0 468.3 L520.0 468.3 L522.0 468.3 L524.0 468.1 L526.0 468.2 L528.0 468.3 L530.0 468.2 L532.0 468.3 L534.0 468.2 L536.0 468.2 L538.0 467.9 L540.0 468.3 L542.0 468.2 L544.0 468.0 L546.0 468.4 L548.0 468.4 L550.0 468.2 L552.0 468.0 L554.0 468.2 L556.0 468.0 L558.0 468.0 L560.0 468.2 L562.0 467.9 L564.0 468.2 L566.0 468.2 L568.0 467.9 L570.0 468.3 L572.0 467.9 L574.0 468.4 L576.0 468.4 L578.0 468.2 L580.0 467.9 L582.0 468.2 L584.0 468.1 L586.0 468.5 L588.0 468.0 L590.0 468.5 L592.0 468.6 L594.0 468.4 L596.0 468.5 L598.0 468.0 L600.0 468.6 L600.8 468.2" stroke="#34d4e4" stroke-width="2" fill="none"/><path d="M298.6 517.7 L298.6 448.7 L299.6 448.7 L300.0 450.3 L300.4 451.6 L300.8 452.8 L301.2 453.9 L301.6 454.8 L302.0 455.6 L302.4 456.3 L302.8 456.9 L303.2 457.4 L303.6 457.9 L304.0 458.3 L304.4 458.7 L304.8 459.0 L305.2 459.2 L305.6 459.5 L306.0 459.7 L306.4 459.9 L306.8 460.0 L307.2 460.2 L307.6 460.3 L308.0 460.4 L308.4 460.5 L308.8 460.6 L309.2 460.7 L309.6 460.7 L310.0 460.8 L310.4 460.8 L310.8 460.9 L311.2 460.9 L311.6 460.9 L312.0 461.0 L312.4 461.0 L312.8 461.0 L313.2 461.0 L313.6 461.0 L314.0 461.2 L316.0 461.5 L318.0 461.5 L320.0 460.9 L322.0 461.4 L324.0 461.5 L326.0 460.9 L328.0 461.1 L330.0 461.3 L332.0 460.9 L334.0 461.4 L336.0 461.0 L338.0 461.4 L340.0 460.9 L342.0 461.2 L344.0 461.5 L346.0 461.0 L348.0 461.0 L350.0 461.2 L352.0 461.0 L354.0 460.8 L356.0 460.9 L358.0 460.9 L360.0 461.5 L362.0 461.3 L364.0 461.4 L366.0 460.9 L368.0 461.4 L370.0 460.9 L372.0 461.2 L374.0 461.3 L376.0 461.1 L378.0 461.4 L380.0 461.2 L382.0 461.2 L384.0 461.4 L386.0 460.9 L388.0 461.5 L390.0 461.3 L392.0 461.1 L394.0 461.4 L396.0 461.0 L398.0 461.5 L400.0 461.2 L402.0 461.1 L404.0 461.4 L406.0 461.1 L408.0 460.9 L410.0 461.3 L412.0 460.9 L414.0 461.4 L416.0 461.0 L418.0 461.3 L420.0 461.5 L422.0 461.2 L424.0 461.3 L426.0 461.0 L428.0 460.8 L430.0 460.8 L432.0 460.9 L434.0 461.2 L436.0 461.1 L438.0 461.2 L440.0 461.4 L442.0 460.9 L444.0 461.0 L446.0 461.3 L448.0 460.8 L450.0 460.8 L452.0 461.1 L454.0 460.9 L456.0 461.1 L458.0 461.0 L460.0 461.2 L462.0 461.2 L464.0 461.0 L466.0 461.3 L468.0 461.1 L470.0 460.9 L472.0 461.5 L474.0 461.0 L476.0 460.9 L478.0 460.9 L480.0 461.3 L482.0 461.4 L484.0 461.4 L486.0 461.1 L488.0 461.0 L490.0 460.8 L492.0 461.3 L494.0 461.2 L496.0 461.1 L498.0 461.3 L500.0 461.1 L502.0 461.5 L504.0 461.3 L506.0 461.0 L508.0 461.4 L510.0 460.8 L512.0 461.2 L514.0 461.1 L516.0 461.0 L518.0 460.9 L520.0 461.4 L522.0 460.8 L524.0 461.2 L526.0 461.5 L528.0 460.9 L530.0 461.0 L532.0 461.2 L534.0 461.2 L536.0 461.3 L538.0 461.4 L540.0 460.9 L542.0 461.0 L544.0 461.0 L546.0 460.9 L548.0 461.4 L550.0 461.4 L552.0 461.3 L554.0 460.8 L556.0 461.4 L558.0 461.3 L560.0 461.1 L562.0 461.3 L564.0 461.1 L566.0 461.0 L568.0 460.9 L570.0 461.0 L572.0 460.8 L574.0 461.1 L576.0 461.3 L578.0 461.3 L580.0 461.4 L582.0 461.3 L584.0 461.0 L586.0 461.2 L588.0 461.1 L590.0 461.4 L592.0 461.2 L594.0 461.0 L596.0 461.3 L598.0 461.5 L600.0 461.0 L600.8 461.2" stroke="#34d4e4" stroke-width="2" fill="none"/><path d="M301.1 403.3 C301.6 425 302.3 440 304.5 448 Q306.5 453.5 311 454.1 H600.8 V517.7" stroke="#1a22a8" stroke-width="2.3" fill="none"/><path d="M296.6 517.7 V403.3 H301.1" stroke="#1c4ae0" stroke-width="2.2" fill="none"/><line x1="267.2" y1="517.7" x2="296.6" y2="517.7" stroke="#1a1a50" stroke-width="1.8"/><path d="M600.8 517.7 L601.3 558 Q603.3 545 604.8 528 Q606.8 519 613.8 517.7 Z" fill="#3cd8f0"/><path d="M602.0 517.7 V600" stroke="#2060e8" stroke-width="3"/><path d="M602.0 598 V632" stroke="#1a1ab8" stroke-width="2.4"/><path d="M603.0 601 V560 Q603.8 535 605.8 525 Q608.8 518 616.8 517.7 H878" stroke="#1a2a7a" stroke-width="1.7" fill="none"/><clipPath id="cpa"><rect x="296" y="231" width="305" height="38"/><rect x="296" y="456" width="305" height="61"/></clipPath><g clip-path="url(#cpa)"><line x1="327.9" y1="156" x2="327.9" y2="383.5" stroke="#ababab" stroke-width="1.1" stroke-dasharray="4.5 3.8" opacity="0.85"/><line x1="327.9" y1="403" x2="327.9" y2="632.5" stroke="#ababab" stroke-width="1.1" stroke-dasharray="4.5 3.8" opacity="0.5"/><line x1="389.1" y1="156" x2="389.1" y2="383.5" stroke="#ababab" stroke-width="1.1" stroke-dasharray="4.5 3.8" opacity="0.85"/><line x1="389.1" y1="403" x2="389.1" y2="632.5" stroke="#ababab" stroke-width="1.1" stroke-dasharray="4.5 3.8" opacity="0.5"/><line x1="450.3" y1="156" x2="450.3" y2="383.5" stroke="#ababab" stroke-width="1.1" stroke-dasharray="4.5 3.8" opacity="0.85"/><line x1="450.3" y1="403" x2="450.3" y2="632.5" stroke="#ababab" stroke-width="1.1" stroke-dasharray="4.5 3.8" opacity="0.5"/><line x1="511.5" y1="156" x2="511.5" y2="383.5" stroke="#ababab" stroke-width="1.1" stroke-dasharray="4.5 3.8" opacity="0.85"/><line x1="511.5" y1="403" x2="511.5" y2="632.5" stroke="#ababab" stroke-width="1.1" stroke-dasharray="4.5 3.8" opacity="0.5"/><line x1="572.8" y1="156" x2="572.8" y2="383.5" stroke="#ababab" stroke-width="1.1" stroke-dasharray="4.5 3.8" opacity="0.85"/><line x1="572.8" y1="403" x2="572.8" y2="632.5" stroke="#ababab" stroke-width="1.1" stroke-dasharray="4.5 3.8" opacity="0.5"/></g><line x1="578" y1="155" x2="578" y2="383.6" stroke="#2a7a2a" stroke-width="1.5"/><line x1="578" y1="403" x2="578" y2="630.3" stroke="#2a7a2a" stroke-width="1.5"/><path d="M880 266.8 H884.8 L880.2 274.0 H885.4 M883.6 269.5 H887.6" stroke="#1a1a1a" stroke-width="1.4" fill="none"/><path d="M880 514.7 H884.8 L880.2 521.9000000000001 H885.4 M883.6 517.4000000000001 H887.6" stroke="#1a1a1a" stroke-width="1.4" fill="none"/></svg>
<svg class="a" style="left:891px;top:230.7px" width="15.5" height="15.4" viewBox="0 0 15.5 15.4"><rect x="1" y="1" width="13.5" height="13.4" rx="3" fill="#7c7c7c" stroke="#3c3c3c" stroke-width="2"/><path d="M7.75 3.3880000000000012 L12.09 11.550000000000004 L3.41 11.550000000000004 Z" stroke="#e8e8e8" stroke-width="1.1" fill="none"/></svg>
<svg class="a" style="left:891px;top:250.7px" width="15.5" height="14.8" viewBox="0 0 15.5 14.8"><rect x="1" y="1" width="13.5" height="12.8" rx="3" fill="#7c7c7c" stroke="#3c3c3c" stroke-width="2"/><path d="M7.75 2.9600000000000026 V11.84000000000001 M3.1 7.400000000000006 H12.4" stroke="#f0f0f0" stroke-width="2"/></svg>
<svg class="a" style="left:891px;top:270.7px" width="15.5" height="14.8" viewBox="0 0 15.5 14.8"><rect x="1" y="1" width="13.5" height="12.8" rx="3" fill="#7c7c7c" stroke="#3c3c3c" stroke-width="2"/><path d="M3.1 7.400000000000006 H12.4" stroke="#f0f0f0" stroke-width="2.2"/></svg>
<svg class="a" style="left:891px;top:289.5px" width="15.5" height="14.8" viewBox="0 0 15.5 14.8"><rect x="1" y="1" width="13.5" height="12.8" rx="3" fill="#7c7c7c" stroke="#3c3c3c" stroke-width="2"/><path d="M7.75 11.54400000000001 L12.09 3.700000000000003 L3.41 3.700000000000003 Z" stroke="#e8e8e8" stroke-width="1.1" fill="none"/></svg>
<svg class="a" style="left:891px;top:479.7px" width="15.5" height="14.0" viewBox="0 0 15.5 14.0"><rect x="1" y="1" width="13.5" height="12.0" rx="3" fill="#7c7c7c" stroke="#3c3c3c" stroke-width="2"/><path d="M7.75 3.08 L12.09 10.5 L3.41 10.5 Z" stroke="#e8e8e8" stroke-width="1.1" fill="none"/></svg>
<svg class="a" style="left:891px;top:499.7px" width="15.5" height="13.9" viewBox="0 0 15.5 13.9"><rect x="1" y="1" width="13.5" height="11.9" rx="3" fill="#7c7c7c" stroke="#3c3c3c" stroke-width="2"/><path d="M7.75 2.780000000000007 V11.120000000000028 M3.1 6.950000000000017 H12.4" stroke="#f0f0f0" stroke-width="2"/></svg>
<svg class="a" style="left:891px;top:519px" width="15.5" height="14.6" viewBox="0 0 15.5 14.6"><rect x="1" y="1" width="13.5" height="12.6" rx="3" fill="#7c7c7c" stroke="#3c3c3c" stroke-width="2"/><path d="M3.1 7.300000000000011 H12.4" stroke="#f0f0f0" stroke-width="2.2"/></svg>
<svg class="a" style="left:891px;top:537.4px" width="15.5" height="14.6" viewBox="0 0 15.5 14.6"><rect x="1" y="1" width="13.5" height="12.6" rx="3" fill="#7c7c7c" stroke="#3c3c3c" stroke-width="2"/><path d="M7.75 11.388000000000018 L12.09 3.6500000000000057 L3.41 3.6500000000000057 Z" stroke="#e8e8e8" stroke-width="1.1" fill="none"/></svg>
<svg class="a" style="left:197.3px;top:268.7px" width="15.9" height="16.2" viewBox="0 0 15.9 16.2"><rect x="1" y="1" width="13.9" height="14.2" rx="3" fill="#7c7c7c" stroke="#3c3c3c" stroke-width="2"/><path d="M2.8619999999999957 10.691999999999993 L5.405999999999993 13.93199999999999 L13.35599999999998 2.9159999999999977" stroke="#e8e8e8" stroke-width="1.4" fill="none"/></svg>
<svg class="a" style="left:197.3px;top:517.6px" width="15.9" height="15.8" viewBox="0 0 15.9 15.8"><rect x="1" y="1" width="13.9" height="13.8" rx="3" fill="#7c7c7c" stroke="#3c3c3c" stroke-width="2"/><path d="M2.8619999999999957 10.42799999999997 L5.405999999999993 13.58799999999996 L13.35599999999998 2.843999999999992" stroke="#e8e8e8" stroke-width="1.4" fill="none"/></svg>
<svg class="a" style="left:341px;top:670.4px" width="15.8" height="14.3" viewBox="0 0 15.8 14.3"><rect x="1" y="1" width="13.8" height="12.3" rx="3" fill="#7c7c7c" stroke="#3c3c3c" stroke-width="2"/><path d="M3.4760000000000026 7.150000000000034 L11.850000000000009 3.146000000000015 L11.850000000000009 11.154000000000053 Z" stroke="#e8e8e8" stroke-width="1.1" fill="none"/></svg>
<svg class="a" style="left:361px;top:670.4px" width="15.0" height="14.3" viewBox="0 0 15.0 14.3"><rect x="1" y="1" width="13.0" height="12.3" rx="3" fill="#7c7c7c" stroke="#3c3c3c" stroke-width="2"/><path d="M7.5 2.8600000000000136 V11.440000000000055 M3.0 7.150000000000034 H12.0" stroke="#f0f0f0" stroke-width="2"/></svg>
<svg class="a" style="left:380.6px;top:670.4px" width="16.1" height="14.3" viewBox="0 0 16.1 14.3"><rect x="1" y="1" width="14.1" height="12.3" rx="3" fill="#7c7c7c" stroke="#3c3c3c" stroke-width="2"/><path d="M3.2199999999999935 7.150000000000034 H12.879999999999974" stroke="#f0f0f0" stroke-width="2.2"/></svg>
<svg class="a" style="left:400.6px;top:670.4px" width="15.8" height="14.3" viewBox="0 0 15.8 14.3"><rect x="1" y="1" width="13.8" height="12.3" rx="3" fill="#7c7c7c" stroke="#3c3c3c" stroke-width="2"/><path d="M12.323999999999964 7.150000000000034 L3.9499999999999886 3.146000000000015 L3.9499999999999886 11.154000000000053 Z" stroke="#e8e8e8" stroke-width="1.1" fill="none"/></svg>
<div class="t" style="left:38.30px;top:11.16px;font-size:16.66px;font-weight:bold;color:#fff;transform:scaleY(0.992)">WinWCP : C:\Data\File_002.wcp</div>
<div class="t" style="left:50.63px;top:84.53px;font-size:16.60px;font-weight:bold;color:#fff;transform:scaleY(0.969)">View (Recordings)</div>
<div class="t" style="left:16.73px;top:38.70px;font-size:14.63px;color:#000;transform:scaleY(1.109)">File</div>
<div class="t" style="left:56.42px;top:38.70px;font-size:14.70px;color:#000;transform:scaleY(1.105)">Edit</div>
<div class="t" style="left:100.26px;top:38.70px;font-size:14.16px;color:#000;transform:scaleY(1.146)">View</div>
<div class="t" style="left:147.47px;top:38.70px;font-size:15.36px;color:#000;transform:scaleY(1.057)">Record</div>
<div class="t" style="left:213.23px;top:38.70px;font-size:15.40px;color:#000;transform:scaleY(1.054)">Setup</div>
<div class="t" style="left:271.00px;top:38.70px;font-size:14.91px;color:#000;transform:scaleY(1.089)">Analysis</div>
<div class="t" style="left:342.86px;top:38.70px;font-size:14.70px;color:#000;transform:scaleY(1.104)">Simulations</div>
<div class="t" style="left:436.85px;top:38.70px;font-size:14.71px;color:#000;transform:scaleY(1.103)">Windows</div>
<div class="t" style="left:512.81px;top:38.70px;font-size:14.92px;color:#000;transform:scaleY(1.088)">Help</div>
<div class="t" style="left:40.17px;top:110.00px;font-size:17.89px;color:#1c1c1c;transform:scaleY(0.875)">Record</div>
<div class="t" style="left:44.83px;top:134.52px;font-size:17.34px;color:#1c1c1c;transform:scaleY(1.036)">20 / 20</div>
<div class="t" style="left:30.23px;top:198.11px;font-size:17.11px;color:#1c1c1c;transform:scaleY(0.983)">Marker</div>
<div class="t" style="left:31.24px;top:230.69px;font-size:17.88px;color:#1c1c1c;transform:scaleY(0.981)">Time</div>
<div class="t" style="left:86.68px;top:232.52px;font-size:17.79px;color:#1c1c1c;transform:scaleY(1.084)">19.19s</div>
<div class="t" style="left:31.27px;top:268.91px;font-size:16.62px;color:#1c1c1c;transform:scaleY(1.012)">Type</div>
<div class="t" style="left:89.38px;top:273.72px;font-size:16.22px;color:#1c1c1c;transform:scaleY(1.108)">TEST</div>
<div class="t" style="left:30.73px;top:305.26px;font-size:17.50px;color:#1c1c1c;transform:scaleY(0.977)">Group #</div>
<div class="t" style="left:113.72px;top:311.31px;font-size:17.65px;color:#1c1c1c;transform:scaleY(0.953)">20</div>
<div class="t" style="left:73.08px;top:339.81px;font-size:17.76px;color:#1c1c1c;transform:scaleY(0.946)">Rejected</div>
<div class="t" style="left:40.16px;top:372.30px;font-size:17.95px;color:#1c1c1c;transform:scaleY(0.872)">Low pass filter</div>
<div class="t" style="left:62.30px;top:394.70px;font-size:15.82px;color:#1c1c1c;transform:scaleY(0.989)">Active</div>
<div class="t" style="left:40.69px;top:485.59px;font-size:18.12px;color:#1c1c1c;transform:scaleY(0.936)">Cursor</div>
<div class="t" style="left:61.14px;top:507.89px;font-size:16.58px;font-weight:bold;color:#000;transform:scaleY(1.058)">Get Cursor</div>
<div class="t" style="left:48.33px;top:539.49px;font-size:16.71px;font-weight:bold;color:#000;transform:scaleY(1.015)">Get c0 Cursor</div>
<div class="t" style="left:66.79px;top:570.12px;font-size:16.91px;font-weight:bold;color:#000;transform:scaleY(1.063)">Save (F1)</div>
<div class="t" style="left:49.42px;top:600.09px;font-size:15.96px;color:#1c1c1c;transform:scaleY(0.944)">Zero Level</div>
<div class="t" style="left:70.65px;top:624.18px;font-size:16.48px;font-weight:bold;color:#000;transform:scaleY(0.879)">Baseline</div>
<div class="t" style="left:71.15px;top:646.59px;font-size:16.27px;font-weight:bold;color:#000;transform:scaleY(0.926)">c0 cursor</div>
<div class="t" style="left:192.11px;top:119.41px;font-size:17.72px;color:#1c1c1c;transform:scaleY(1.055)">Ident:</div>
<div class="t" style="left:11.13px;top:716.90px;font-size:15.36px;color:#1c1c1c;transform:scaleY(1.057)">Stopped 20 records in file</div>
<div class="t" style="left:238.81px;top:177.59px;font-size:15.76px;color:#1c1c1c;transform:scaleY(1.196)">200</div>
<div class="t" style="left:234.60px;top:341.26px;font-size:15.10px;color:#1c1c1c;transform:scaleY(1.257)">-200</div>
<div class="t" style="left:235.24px;top:249.22px;font-size:15.63px;color:#1c1c1c;transform:scaleY(1.149)">Vm</div>
<div class="t" style="left:235.82px;top:269.82px;font-size:13.94px;color:#1c1c1c;transform:scaleY(1.247)">mV</div>
<div class="t" style="left:257.31px;top:386.31px;font-size:17.35px;color:#2e862e;transform:scaleY(0.969)">c0</div>
<div class="t" style="left:542.20px;top:385.61px;font-size:15.05px;color:#2e862e;transform:scaleY(1.117)">89.921 mV</div>
<div class="t" style="left:229.83px;top:433.31px;font-size:15.90px;color:#1c1c1c;transform:scaleY(1.175)">1000</div>
<div class="t" style="left:232.67px;top:497.62px;font-size:13.66px;color:#1c1c1c;transform:scaleY(1.316)">Im1</div>
<div class="t" style="left:238.69px;top:518.90px;font-size:15.83px;color:#1c1c1c;transform:scaleY(1.026)">pA</div>
<div class="t" style="left:225.99px;top:582.46px;font-size:15.24px;color:#1c1c1c;transform:scaleY(1.246)">-1000</div>
<div class="t" style="left:257.64px;top:632.84px;font-size:16.43px;color:#2e862e;transform:scaleY(1.050)">c0</div>
<div class="t" style="left:511.00px;top:633.11px;font-size:15.25px;color:#2e862e;transform:scaleY(1.103)">t= 102.4, 759.25 pA</div>
<div class="t" style="left:270.17px;top:670.54px;font-size:15.72px;color:#1c1c1c;transform:scaleY(1.097)">0.00</div>
<div class="t" style="left:303.44px;top:671.41px;font-size:15.12px;color:#1c1c1c;transform:scaleY(1.073)">ms</div>
<div class="t" style="left:842.43px;top:669.68px;font-size:15.49px;color:#1c1c1c;transform:scaleY(1.179)">204.75</div>
<div class="t" style="left:893.79px;top:670.93px;font-size:14.39px;color:#1c1c1c;transform:scaleY(1.167)">ms</div>
</body></html>
